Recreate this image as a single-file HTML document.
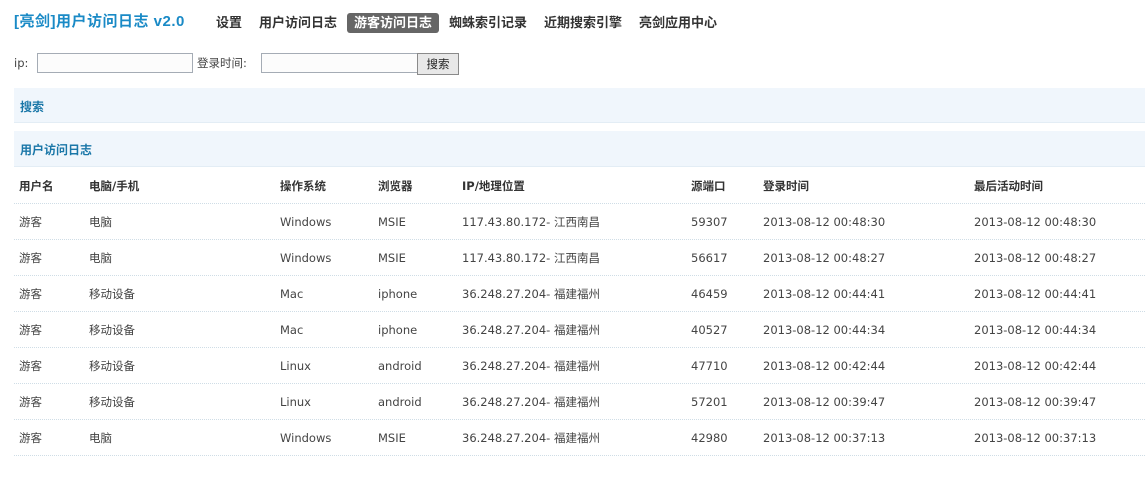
<!DOCTYPE html>
<html><head><meta charset="utf-8"><style>
body{margin:0;width:1145px;height:487px;background:#fff;font-family:"DejaVu Sans","Noto Sans CJK SC",sans-serif;font-size:11.5px;color:#333;position:relative;overflow:hidden}
.a{position:absolute;white-space:nowrap;line-height:16px}
.nav{top:15px;font-size:13px;font-weight:bold;color:#333;font-family:"Liberation Sans","Noto Sans CJK SC",sans-serif}
.inp{position:absolute;height:20px;border:1px solid #a5acb5;background:#fcfcfc;box-sizing:border-box}
.bar{position:absolute;left:14px;width:1131px;background:#f0f6fc;border-bottom:1px solid #e3edf5}
.bar b{position:absolute;left:6px;color:#1a77a8;font-size:12px;line-height:16px}
.row{position:absolute;left:14px;width:1131px;height:36px;border-bottom:1px dotted #cfdde6}
.row span{position:absolute;top:11px;color:#444;line-height:16px;white-space:nowrap}
.hd span{font-weight:bold;color:#333}
</style></head><body>
<div class="a" style="left:14px;top:14px;font-size:15px;color:#1a8ac6;font-weight:bold;font-family:'Liberation Sans','Noto Sans CJK SC',sans-serif;letter-spacing:0.5px">[亮剑]用户访问日志 v2.0</div>
<div class="a nav" style="left:216px">设置</div>
<div class="a nav" style="left:259px">用户访问日志</div>
<div class="a" style="left:347px;top:13px;width:92px;height:20px;background:#666;border-radius:3px"></div>
<div class="a nav" style="left:354px;color:#fff">游客访问日志</div>
<div class="a nav" style="left:449px">蜘蛛索引记录</div>
<div class="a nav" style="left:544px">近期搜索引擎</div>
<div class="a nav" style="left:639px">亮剑应用中心</div>
<div class="a" style="left:14px;top:55px;color:#444">ip:</div>
<div class="inp" style="left:37px;top:53px;width:156px"></div>
<div class="a" style="left:197px;top:55px;color:#444">登录时间:</div>
<div class="inp" style="left:261px;top:53px;width:157px"></div>
<div class="a" style="left:417px;top:53px;width:42px;height:22px;box-sizing:border-box;border:1px solid #8a8a8a;background:#e8e8e8;text-align:center;line-height:20px;color:#222">搜索</div>
<div class="bar" style="top:88px;height:34px"><b style="top:11px">搜索</b></div>
<div class="bar" style="top:131px;height:35px"><b style="top:11px">用户访问日志</b></div>
<div class="row hd" style="top:167px"><span style="left:5px">用户名</span><span style="left:75px">电脑/手机</span><span style="left:266px">操作系统</span><span style="left:364px">浏览器</span><span style="left:448px">IP/地理位置</span><span style="left:677px">源端口</span><span style="left:749px">登录时间</span><span style="left:960px">最后活动时间</span></div>
<div class="row" style="top:203px"><span style="left:5px">游客</span><span style="left:75px">电脑</span><span style="left:266px">Windows</span><span style="left:364px">MSIE</span><span style="left:448px">117.43.80.172- 江西南昌</span><span style="left:677px">59307</span><span style="left:749px">2013-08-12 00:48:30</span><span style="left:960px">2013-08-12 00:48:30</span></div>
<div class="row" style="top:239px"><span style="left:5px">游客</span><span style="left:75px">电脑</span><span style="left:266px">Windows</span><span style="left:364px">MSIE</span><span style="left:448px">117.43.80.172- 江西南昌</span><span style="left:677px">56617</span><span style="left:749px">2013-08-12 00:48:27</span><span style="left:960px">2013-08-12 00:48:27</span></div>
<div class="row" style="top:275px"><span style="left:5px">游客</span><span style="left:75px">移动设备</span><span style="left:266px">Mac</span><span style="left:364px">iphone</span><span style="left:448px">36.248.27.204- 福建福州</span><span style="left:677px">46459</span><span style="left:749px">2013-08-12 00:44:41</span><span style="left:960px">2013-08-12 00:44:41</span></div>
<div class="row" style="top:311px"><span style="left:5px">游客</span><span style="left:75px">移动设备</span><span style="left:266px">Mac</span><span style="left:364px">iphone</span><span style="left:448px">36.248.27.204- 福建福州</span><span style="left:677px">40527</span><span style="left:749px">2013-08-12 00:44:34</span><span style="left:960px">2013-08-12 00:44:34</span></div>
<div class="row" style="top:347px"><span style="left:5px">游客</span><span style="left:75px">移动设备</span><span style="left:266px">Linux</span><span style="left:364px">android</span><span style="left:448px">36.248.27.204- 福建福州</span><span style="left:677px">47710</span><span style="left:749px">2013-08-12 00:42:44</span><span style="left:960px">2013-08-12 00:42:44</span></div>
<div class="row" style="top:383px"><span style="left:5px">游客</span><span style="left:75px">移动设备</span><span style="left:266px">Linux</span><span style="left:364px">android</span><span style="left:448px">36.248.27.204- 福建福州</span><span style="left:677px">57201</span><span style="left:749px">2013-08-12 00:39:47</span><span style="left:960px">2013-08-12 00:39:47</span></div>
<div class="row" style="top:419px"><span style="left:5px">游客</span><span style="left:75px">电脑</span><span style="left:266px">Windows</span><span style="left:364px">MSIE</span><span style="left:448px">36.248.27.204- 福建福州</span><span style="left:677px">42980</span><span style="left:749px">2013-08-12 00:37:13</span><span style="left:960px">2013-08-12 00:37:13</span></div>
</body></html>
